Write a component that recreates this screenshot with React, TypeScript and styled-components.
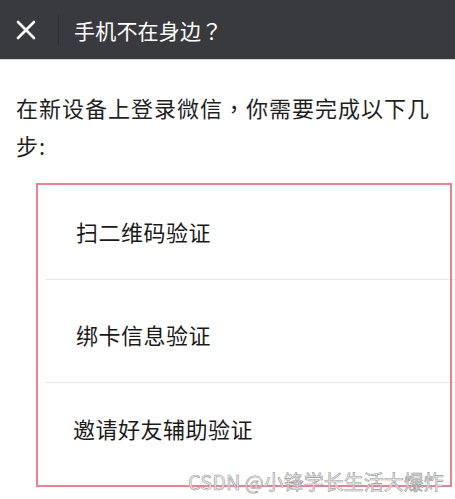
import React from "react";
import styled, { createGlobalStyle } from "styled-components";

const GlobalStyle = createGlobalStyle`
  html, body {
    margin: 0;
    padding: 0;
    background: #ffffff;
  }
  body {
    font-family: "Noto Sans CJK SC", "Noto Sans", sans-serif;
  }
`

const Page = styled.div`
  position: relative;
  width: 455px;
  height: 499px;
  overflow: hidden;
  background: #ffffff;
`

const Header = styled.div`
  display: flex;
  align-items: center;
  height: 60px;
  background: #393a3e;
  border-bottom: 1px solid #d8d8d8;
  box-sizing: border-box;
`

const CloseButton = styled.div`
  display: flex;
  align-items: center;
  justify-content: center;
  width: 52px;
  height: 100%;
`

const Divider = styled.div`
  width: 1px;
  height: 30px;
  margin-left: 6px;
  background: #2c2d30;
`

const Title = styled.div`
  margin-left: 15px;
  font-size: 21px;
  color: #ffffff;
  letter-spacing: 0.2px;
`

// full-width punctuation centred in its cell, as in the screenshot
const Punct = styled.span`
  font-family: "Noto Sans CJK TC", "Noto Sans CJK SC", sans-serif;
`

const Intro = styled.p`
  margin: 28px 0 0;
  padding: 0 16px;
  font-family: "Noto Sans CJK TC", "Noto Sans CJK SC", sans-serif;
  font-size: 22px;
  line-height: 38px;
  letter-spacing: 1px;
  color: #1f1f1f;
`

const Steps = styled.div`
  margin: 13px 0 0 46px;
  display: flex;
  flex-direction: column;
`

const Step = styled.div`
  display: flex;
  align-items: center;
  height: 96px;
  padding: 6px 0 0 30px;
  box-sizing: content-box;
  border-bottom: 1px solid #e8e8e8;
  font-size: 22px;
  color: #1a1a1a;
  letter-spacing: 0.5px;

  &:last-child {
    border-bottom: none;
    padding: 0 0 12px 27px;
    height: 90px;
  }
`

const Highlight = styled.div`
  position: absolute;
  left: 36px;
  top: 183px;
  width: 416px;
  height: 304px;
  box-sizing: border-box;
  border: 2px solid #ea8190;
  pointer-events: none;
`

const Watermark = styled.div`
  position: absolute;
  left: 188px;
  top: 467px;
  font-size: 20px;
  color: #f0f0f0;
  -webkit-text-stroke: 0.6px #999999;
  white-space: nowrap;
`

const CloseIcon = () => (
  <svg width="20" height="20" viewBox="0 0 20 20">
    <path d="M2 2 L18 18 M18 2 L2 18" stroke="#ffffff" strokeWidth="2.6" strokeLinecap="round" />
  </svg>
)

const steps = ["扫二维码验证", "绑卡信息验证", "邀请好友辅助验证"]

const App = () => {
  return (
    <Page>
      <GlobalStyle />
      <Header>
        <CloseButton>
          <CloseIcon />
        </CloseButton>
        <Divider />
        <Title>手机不在身边<Punct>？</Punct></Title>
      </Header>
      <Intro>在新设备上登录微信，你需要完成以下几步:</Intro>
      <Steps>
        {steps.map((s) => (
          <Step key={s}>{s}</Step>
        ))}
      </Steps>
      <Highlight />
      <Watermark>CSDN @小锋学长生活大爆炸</Watermark>
    </Page>
  )
}

export default App;
